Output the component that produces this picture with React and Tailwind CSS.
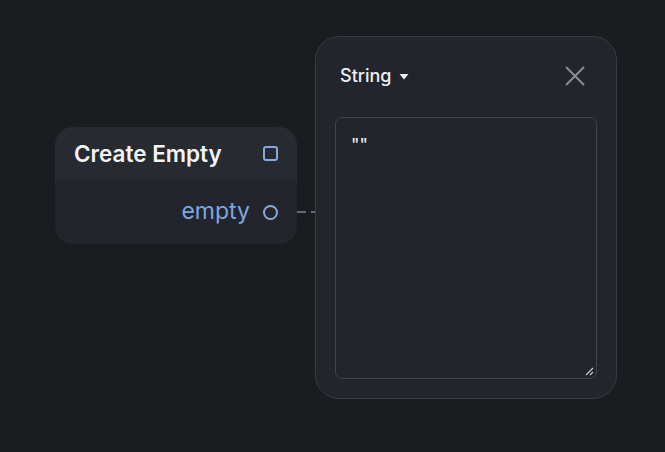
import React from "react";

function NodeCard() {
  return (
    <div className="w-[242px] rounded-[18px] bg-[#22252b] overflow-hidden">
      <div className="h-[53px] bg-[#272a31] flex items-center justify-between pl-[19px] pr-[19px]">
        <span className="text-[22.5px] font-semibold text-[#f3f4f6]">Create Empty</span>
        <span className="w-[15px] h-[15px] rounded-[3px] border-2 border-[#86a9dc]" />
      </div>
      <div className="h-[64px] flex items-center justify-end pr-[19px] gap-[13px]">
        <span className="text-[23px] text-[#7ea6e0] pb-[2px]">empty</span>
        <span className="w-[15px] h-[15px] rounded-full border-2 border-[#86a9dc]" />
      </div>
    </div>
  );
}

function ValuePanel() {
  return (
    <div className="w-[302px] h-[363px] rounded-[24px] bg-[#22252b] border border-[#383b42] px-[19px] pt-[25px] pb-[19px] flex flex-col">
      <div className="flex items-center justify-between h-[28px] pl-[5px] pr-[11px]">
        <div className="flex items-center gap-[8px]">
          <span className="text-[18px] font-medium text-[#eceef2] -mt-[2px]">String</span>
          <svg width="10" height="7" viewBox="0 0 10 7">
            <path d="M0.5 1h9L5 6.5z" fill="#eceef2" />
          </svg>
        </div>
        <svg width="22" height="22" viewBox="0 0 22 22">
          <path d="M2 2L20 20M20 2L2 20" stroke="#8b8e94" strokeWidth="2" />
        </svg>
      </div>
      <div className="mt-[27px] relative flex-1 rounded-[7px] border border-[#41444b] bg-[#22252b]">
        <span className="absolute left-[15px] top-[17px] text-[14px] font-bold text-[#eef0f3] font-['Liberation_Mono',monospace]">""</span>
        <svg className="absolute right-[2px] bottom-[2px]" width="9" height="9" viewBox="0 0 9 9">
          <path d="M8 1L1 8M8 5L5 8" stroke="#c8cbd0" strokeWidth="1.2" />
        </svg>
      </div>
    </div>
  );
}

export default function App() {
  return (
    <div className="w-[665px] h-[452px] bg-[#1a1c20] font-['Inter',sans-serif] flex items-start pt-[36px] pl-[55px] overflow-hidden">
      <div className="mt-[91px]">
        <NodeCard />
      </div>
      <div className="mt-[175px] flex gap-[5px] w-[18px]">
        <span className="h-[2px] w-[9px] bg-[#5b6b84]" />
        <span className="h-[2px] w-[4px] bg-[#5b6b84]" />
      </div>
      <ValuePanel />
    </div>
  );
}
